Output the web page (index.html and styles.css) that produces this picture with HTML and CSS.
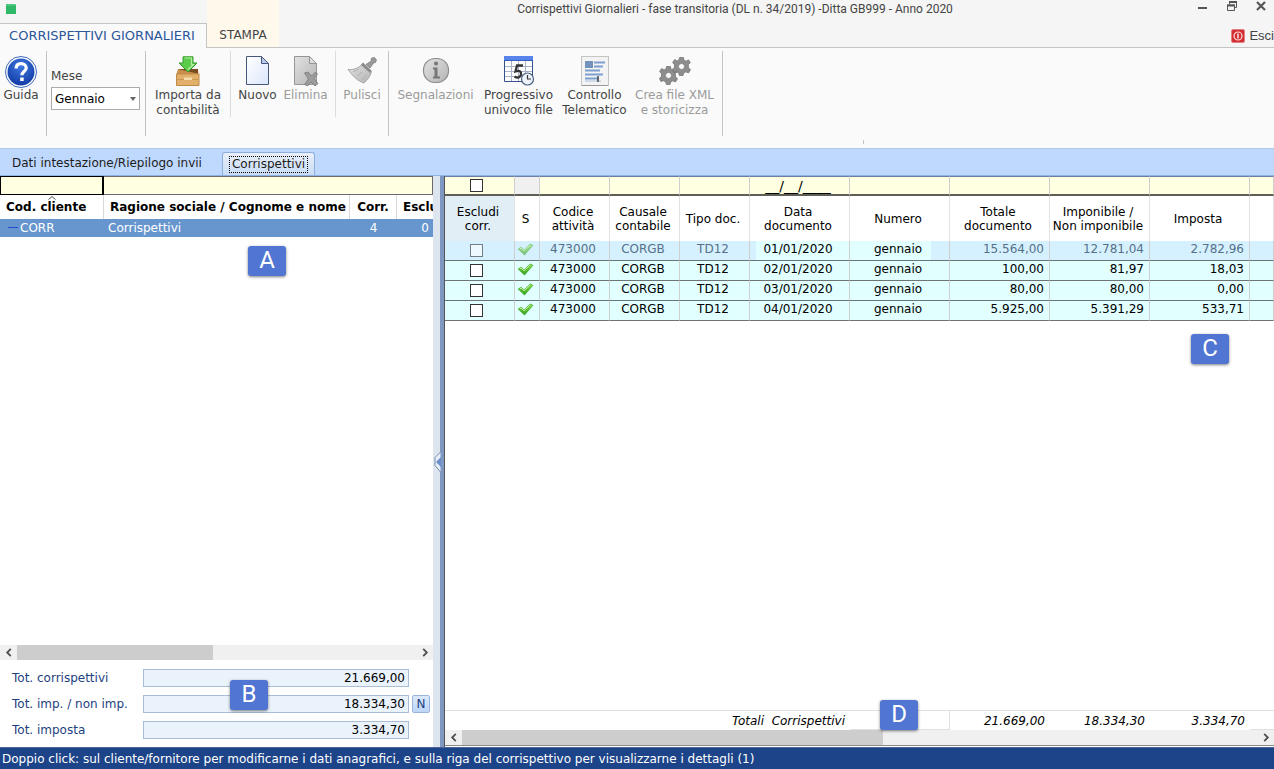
FILE: index.html
```html
<!DOCTYPE html>
<html lang="it">
<head>
    <meta charset="UTF-8">
    <meta name="viewport" content="width=device-width, initial-scale=1.0">
    <title>Corrispettivi Giornalieri</title>
    <link rel="stylesheet" href="styles.css">
</head>
<body>
    <!-- Shared icons -->
    <svg class="icon-defs" width="0" height="0" aria-hidden="true">
        <defs>
            <linearGradient id="check-green" x1="0" y1="0" x2="0" y2="1">
                <stop offset="0" stop-color="#8be04a"/>
                <stop offset="1" stop-color="#2f9e1c"/>
            </linearGradient>
            <linearGradient id="grey-fill" x1="0" y1="0" x2="1" y2="1">
                <stop offset="0" stop-color="#e2e2e2"/>
                <stop offset="1" stop-color="#b4b4b4"/>
            </linearGradient>
            <linearGradient id="page-fill" x1="0" y1="0" x2="1" y2="1">
                <stop offset="0" stop-color="#ffffff"/>
                <stop offset="1" stop-color="#dbe6fb"/>
            </linearGradient>
            <radialGradient id="help-fill" cx="0.5" cy="0.3" r="0.7">
                <stop offset="0" stop-color="#3f78e0"/>
                <stop offset="1" stop-color="#123ba5"/>
            </radialGradient>
            <symbol id="check" viewBox="0 0 18 14">
                <path d="M1 6.500 L4.500 4.500 L7.500 7.500 L14 1 L17 2.500 L8 13 Z" fill="url(#check-green)" stroke="#3fa52c" stroke-width="0.700"/>
                <path d="M3 6.300 L4.500 5.500 L7.500 8.500 L14 2.200" fill="none" stroke="#c9f5a6" stroke-width="1"/>
            </symbol>
            <symbol id="gear" viewBox="-10 -10 20 20">
                <path d="M-2 -9.500H2L2.600 -6.700L4.900 -5.500L7.300 -7.100L9.300 -4L7.200 -2L7.300 1.200L9.500 3.300L7.300 6.800L4.600 5.600L2.300 6.900L1.600 9.600H-2.200L-2.900 6.800L-5.200 5.400L-7.900 6.400L-9.600 3L-7.400 1L-7.300 -1.800L-9.300 -4.200L-7.200 -7.300L-4.700 -5.800L-2.700 -6.900Z" fill="#8d8d8d" stroke="#707070" stroke-width="0.800"/>
                <circle r="3.200" fill="#fafafa" stroke="#777" stroke-width="0.800"/>
            </symbol>
            <symbol id="arrow-left" viewBox="0 0 8 10">
                <path d="M6 1 L2 5 L6 9" fill="none" stroke="#505050" stroke-width="2"/>
            </symbol>
            <symbol id="arrow-right" viewBox="0 0 8 10">
                <path d="M2 1 L6 5 L2 9" fill="none" stroke="#505050" stroke-width="2"/>
            </symbol>
        </defs>
    </svg>

    <div class="app">
        <!-- Title bar and ribbon tabs -->
        <header class="top">
            <div class="top-left">
                <svg class="app-logo" viewBox="0 0 12 12"><path d="M1 1h9l1 1v9H1z" fill="#2fb868"/><path d="M1 1h9v2H1z" fill="#4cc77e"/></svg>
                <button class="ribbon-tab active">CORRISPETTIVI GIORNALIERI</button>
            </div>
            <div class="top-stampa">
                <button class="ribbon-tab">STAMPA</button>
            </div>
            <h1 class="window-title">Corrispettivi Giornalieri - fase transitoria (DL n. 34/2019) -Ditta GB999 - Anno 2020</h1>
            <div class="top-right">
                <div class="window-buttons">
                    <button aria-label="Riduci"><svg viewBox="0 0 12 12"><path d="M1 8h9" stroke="#555" stroke-width="2"/></svg></button>
                    <button aria-label="Ripristina"><svg viewBox="0 0 12 12"><path d="M3.500 4V1.500h7v6H8.500" fill="none" stroke="#555"/><path d="M3 2h8" stroke="#555" stroke-width="2"/><path d="M1.500 5h7v5.500h-7z" fill="#f5f5f5" stroke="#555"/><path d="M1 5.500h8" stroke="#555" stroke-width="2"/></svg></button>
                    <button aria-label="Chiudi"><svg viewBox="0 0 12 12"><path d="M2 2l8 8M10 2l-8 8" stroke="#555" stroke-width="2.200"/></svg></button>
                </div>
                <button class="exit">
                    <svg viewBox="0 0 14 14"><rect x="0.500" y="0.500" width="13" height="13" rx="1.500" fill="#d22f33" stroke="#e58080"/><circle cx="7" cy="7" r="4" fill="none" stroke="#ffd9d9" stroke-width="1.200"/><path d="M7 4.500v5" stroke="#fff" stroke-width="1.300"/></svg>
                    Esci
                </button>
            </div>
        </header>

        <!-- Ribbon -->
        <div class="ribbon">
            <div class="group group-help">
                <button class="tool">
                    <svg viewBox="0 0 32 32"><circle cx="16" cy="16" r="15.500" fill="#fff" stroke="#3c69c0"/><circle cx="16" cy="16" r="13.500" fill="url(#help-fill)"/><path d="M11.200 12.500c0-3 2-4.800 5-4.800s5 1.700 5 4.300c0 3.600-4.300 3.600-4.300 7.300" fill="none" stroke="#fff" stroke-width="3.200"/><rect x="15.200" y="21.500" width="3.500" height="3.500" fill="#fff"/></svg>
                    Guida
                </button>
            </div>
            <div class="group group-month">
                <label for="mese">Mese</label>
                <span class="select-box">
                    <select id="mese"><option>Gennaio</option></select>
                    <svg viewBox="0 0 6 4"><path d="M0 0h6L3 4z" fill="#666"/></svg>
                </span>
            </div>
            <div class="group group-import short">
                <button class="tool">
                    <svg viewBox="0 0 32 32"><path d="M6 13h20v5H6z" fill="#7a4a20"/><path d="M6 13l-1.500 5h23L26 13l1 5z" fill="#c98d4c"/><path d="M4.500 18h22.500v11.500H4.500z" fill="#e3b06c" stroke="#c08a48"/><path d="M5 23.500h21.500" stroke="#cc9550"/><path d="M12 21.500h8v2.500h-8z" fill="#f5dcae"/><path d="M11 0.800h10V7h4l-9 9-9-9h4z" fill="#5ccb4a" stroke="#359c2c"/><path d="M12.500 2h7v6.500h2l-5.500 5" fill="none" stroke="#b5f0a0" stroke-width="1.200"/></svg>
                    Importa da<br>contabilità
                </button>
            </div>
            <div class="group group-edit short">
                <button class="tool tool-new">
                    <svg viewBox="0 0 32 32"><path d="M4.500 0.500h15l7 7v21h-22z" fill="url(#page-fill)" stroke="#46587c"/><path d="M19.500 0.500v7h7z" fill="#b9c9e8" stroke="#46587c"/></svg>
                    Nuovo
                </button>
                <button class="tool tool-delete" disabled>
                    <svg viewBox="0 0 32 32"><path d="M4.500 0.500h15l7 7v21h-22z" fill="url(#grey-fill)" stroke="#969696"/><path d="M19.500 0.500v7h7z" fill="#ddd" stroke="#969696"/><path d="M14.500 17l3.500-1 3.500 4 4-4 2 2-3.500 4.500 4 5-3 2.500-4-4-3.500 4-3-1.500 4-5.500z" fill="#9c9c9c" stroke="#777" stroke-width="0.800"/></svg>
                    Elimina
                </button>
            </div>
            <div class="group group-clean">
                <button class="tool" disabled>
                    <svg viewBox="0 0 32 32"><path d="M20 8.500l5-3.500 .5-3 3-.5 2 2.500-1 2.500-2 .5L24 12z" fill="#999" stroke="#777" stroke-width="0.700"/><path d="M2 13.500c5 .5 11-1 14.500-6l9 8c-1 5-4 8-7.500 11.500C11 25 6 19 2 13.500z" fill="url(#grey-fill)" stroke="#999" stroke-width="0.800"/><path d="M17 6.500l8.500 8-1.500 2.500L15 9z" fill="#8c8c8c"/><path d="M7 16l6-3M11 20l5-4M16 24l4-5" stroke="#aaa" stroke-width="0.800"/></svg>
                    Pulisci
                </button>
            </div>
            <div class="group group-xml">
                <button class="tool tool-info" disabled>
                    <svg viewBox="0 0 32 32"><rect x="3.500" y="2.500" width="25" height="24" rx="11.500" fill="url(#grey-fill)" stroke="#8c8c8c" stroke-width="1.200"/><circle cx="16" cy="7.500" r="2" fill="#777"/><path d="M13 11.500h4.500v9H20v2h-7v-2h1.500v-7H13z" fill="#777"/></svg>
                    Segnalazioni
                </button>
                <button class="tool tool-progress">
                    <svg viewBox="0 0 32 32"><path d="M1.500 0.500h28v25h-28z" fill="#fff" stroke="#35508c"/><path d="M1 0h29v4.500H1z" fill="#5684ea"/><path d="M1 4.500h29" stroke="#3460bd"/><path d="M8.500 5v20M15.500 5v20M22.500 5v20M2 10.500h27M2 15.500h27M2 20.500h27" stroke="#a9b3c8"/><path d="M20 9.500h-6l-1.500 6c4-1.500 6 0 5.500 3s-3.500 4-6.500 2" fill="none" stroke="#333" stroke-width="2.300"/><circle cx="24.500" cy="23" r="6" fill="#eef3fb" stroke="#4c6284" stroke-width="1.200"/><path d="M24.500 19v4h3.500" fill="none" stroke="#333" stroke-width="1.200"/></svg>
                    Progressivo<br>univoco file
                </button>
                <button class="tool tool-check">
                    <svg viewBox="0 0 32 32"><rect x="2.500" y="0.500" width="27" height="29" fill="#f3f3f3" stroke="#c4c4c4"/><path d="M3 29.500h26" stroke="#999"/><path d="M6 5h8v7H6z" fill="#7291bd"/><path d="M15 6.500h11M15 10.500h9M6 14.500h15M6 18.500h18M6 22.500h14" stroke="#7d9fd0" stroke-width="2"/><path d="M6 25h16" stroke="#a9c1e2"/><path d="M19 20v6" stroke="#444" stroke-width="1.500"/></svg>
                    Controllo<br>Telematico
                </button>
                <button class="tool tool-xml" disabled>
                    <svg viewBox="0 0 32 32"><use href="#gear" x="0" y="10" width="19" height="19"/><use href="#gear" x="13" y="1" width="19" height="19"/></svg>
                    Crea file XML<br>e storicizza
                </button>
            </div>
            <div class="ribbon-rest"></div>
        </div>

        <!-- Page tabs -->
        <nav class="page-tabs">
            <a href="#intestazione">Dati intestazione/Riepilogo invii</a>
            <a href="#corrispettivi" class="current"><span>Corrispettivi</span></a>
        </nav>

        <main class="content">
            <!-- Clients -->
            <section class="clients">
                <table class="client-table">
                    <colgroup>
                        <col class="c-code"><col class="c-name"><col class="c-corr"><col>
                    </colgroup>
                    <thead>
                        <tr class="filters">
                            <td class="focused"><input type="text" aria-label="Filtra codice cliente"></td>
                            <td colspan="3"><input type="text" aria-label="Filtra ragione sociale"></td>
                        </tr>
                        <tr class="titles">
                            <th>Cod. cliente<svg class="sort" viewBox="0 0 8 4"><path d="M0.500 3.500L4 0.500l3.500 3" fill="none" stroke="#555"/></svg></th>
                            <th>Ragione sociale / Cognome e nome</th>
                            <th class="center">Corr.</th>
                            <th>Esclu</th>
                        </tr>
                    </thead>
                    <tbody>
                        <tr>
                            <td class="code">CORR</td>
                            <td>Corrispettivi</td>
                            <td class="center">4</td>
                            <td class="number">0</td>
                        </tr>
                    </tbody>
                </table>
                <div class="empty"></div>
                <div class="scrollbar">
                    <button aria-label="Scorri a sinistra"><svg><use href="#arrow-left"/></svg></button>
                    <div class="track"><div class="thumb"></div></div>
                    <button aria-label="Scorri a destra"><svg><use href="#arrow-right"/></svg></button>
                </div>
                <form class="totals">
                    <label for="tot-corr">Tot. corrispettivi</label>
                    <input type="text" id="tot-corr" value="21.669,00" readonly>
                    <span></span>
                    <label for="tot-imp">Tot. imp. / non imp.</label>
                    <input type="text" id="tot-imp" value="18.334,30" readonly>
                    <button type="button">N</button>
                    <label for="tot-imposta">Tot. imposta</label>
                    <input type="text" id="tot-imposta" value="3.334,70" readonly>
                </form>
                <span class="marker marker-a">A</span>
                <span class="marker marker-b">B</span>
            </section>

            <div class="gutter">
                <svg viewBox="0 0 8 22"><path d="M7.500 1L2 6.500v8l5.500 6.500" fill="#e7eefb" stroke="#7a8ca8"/><path d="M8 6v10L3 11z" fill="#6b8fcb"/></svg>
            </div>

            <!-- Documents -->
            <section class="documents">
                <table class="doc-table">
                    <colgroup>
                        <col class="d-first"><col class="d-state"><col class="d-small"><col class="d-small"><col class="d-small"><col class="d-wide"><col class="d-wide"><col class="d-wide"><col class="d-wide"><col class="d-wide"><col>
                    </colgroup>
                    <thead>
                        <tr class="filters">
                            <td class="tick"><input type="checkbox" aria-label="Filtra esclusi"></td>
                            <td class="off"></td>
                            <td></td>
                            <td></td>
                            <td></td>
                            <td><input type="text" class="date-filter" aria-label="Filtra data" value="__/__/____"></td>
                            <td></td>
                            <td></td>
                            <td></td>
                            <td></td>
                            <td></td>
                        </tr>
                        <tr class="titles">
                            <th class="hot">Escludi<br>corr.</th>
                            <th>S</th>
                            <th>Codice<br>attività</th>
                            <th>Causale<br>contabile</th>
                            <th>Tipo doc.</th>
                            <th>Data<br>documento</th>
                            <th>Numero</th>
                            <th>Totale<br>documento</th>
                            <th>Imponibile /<br>Non imponibile</th>
                            <th>Imposta</th>
                            <th></th>
                        </tr>
                    </thead>
                    <tbody>
                        <tr class="selected">
                            <td class="tick"><input type="checkbox" aria-label="Escludi 01/01/2020"></td>
                            <td><svg class="check"><use href="#check"/></svg></td>
                            <td>473000</td>
                            <td>CORGB</td>
                            <td>TD12</td>
                            <td class="date">01/01/2020</td>
                            <td class="ref">gennaio</td>
                            <td class="number">15.564,00</td>
                            <td class="number">12.781,04</td>
                            <td class="number">2.782,96</td>
                            <td></td>
                        </tr>
                        <tr>
                            <td class="tick"><input type="checkbox" aria-label="Escludi 02/01/2020"></td>
                            <td><svg class="check"><use href="#check"/></svg></td>
                            <td>473000</td>
                            <td>CORGB</td>
                            <td>TD12</td>
                            <td>02/01/2020</td>
                            <td>gennaio</td>
                            <td class="number">100,00</td>
                            <td class="number">81,97</td>
                            <td class="number">18,03</td>
                            <td></td>
                        </tr>
                        <tr>
                            <td class="tick"><input type="checkbox" aria-label="Escludi 03/01/2020"></td>
                            <td><svg class="check"><use href="#check"/></svg></td>
                            <td>473000</td>
                            <td>CORGB</td>
                            <td>TD12</td>
                            <td>03/01/2020</td>
                            <td>gennaio</td>
                            <td class="number">80,00</td>
                            <td class="number">80,00</td>
                            <td class="number">0,00</td>
                            <td></td>
                        </tr>
                        <tr>
                            <td class="tick"><input type="checkbox" aria-label="Escludi 04/01/2020"></td>
                            <td><svg class="check"><use href="#check"/></svg></td>
                            <td>473000</td>
                            <td>CORGB</td>
                            <td>TD12</td>
                            <td>04/01/2020</td>
                            <td>gennaio</td>
                            <td class="number">5.925,00</td>
                            <td class="number">5.391,29</td>
                            <td class="number">533,71</td>
                            <td></td>
                        </tr>
                    </tbody>
                </table>
                <div class="empty"></div>
                <table class="sum-table">
                    <colgroup>
                        <col class="s-label"><col class="d-wide"><col class="d-wide"><col class="d-wide"><col class="d-wide"><col>
                    </colgroup>
                    <tbody>
                        <tr>
                            <th>Totali&nbsp; Corrispettivi</th>
                            <td class="boxed"></td>
                            <td>21.669,00</td>
                            <td>18.334,30</td>
                            <td>3.334,70</td>
                            <td class="under"></td>
                        </tr>
                    </tbody>
                </table>
                <div class="scrollbar scrollbar-docs">
                    <button aria-label="Scorri a sinistra"><svg><use href="#arrow-left"/></svg></button>
                    <div class="track"><div class="thumb"></div></div>
                    <button aria-label="Scorri a destra"><svg><use href="#arrow-right"/></svg></button>
                </div>
                <span class="marker marker-c">C</span>
                <span class="marker marker-d">D</span>
            </section>
        </main>

        <!-- Status bar -->
        <footer class="status">Doppio click: sul cliente/fornitore per modificarne i dati anagrafici, e sulla riga del corrispettivo per visualizzarne i dettagli (1)</footer>
    </div>
</body>
</html>
```

FILE: styles.css
```css
/* Global Styles */
* {
    box-sizing: border-box;
}

body {
    margin: 0;
    font-family: "DejaVu Sans", Verdana, sans-serif;
    font-size: 12px;
    line-height: 14px;
    color: #000;
    background: #fff;
}

button,
input,
select {
    font: inherit;
    color: inherit;
    margin: 0;
    padding: 0;
    border: none;
    background: none;
}

table {
    width: 100%;
    table-layout: fixed;
    border-collapse: separate;
    border-spacing: 0;
}

th,
td {
    padding: 0;
    font-weight: normal;
    white-space: nowrap;
}

.icon-defs {
    position: absolute;
}

.app {
    display: flex;
    flex-direction: column;
    height: 100vh;
}

/* Title bar */
.top {
    display: flex;
    flex: none;
    height: 48px;
    background: linear-gradient(#c4c4c4, #c4c4c4) bottom / 100% 1px no-repeat #f5f5f5;
}

.top-left {
    display: flex;
    flex-direction: column;
    justify-content: space-between;
    width: 207px;
}

.app-logo {
    width: 12px;
    height: 12px;
    margin: 3px 5px;
}

.ribbon-tab {
    height: 25px;
    color: #444;
}

.ribbon-tab.active {
    padding-right: 2px;
    font-size: 13px;
    white-space: nowrap;
    color: #2b579a;
    background: #fafafa;
    border-top: 1px solid #c4c4c4;
    border-right: 1px solid #c4c4c4;
}

.top-stampa {
    display: flex;
    align-items: flex-end;
    justify-content: center;
    width: 72px;
    height: 47px;
    background: #fff9ec;
}

.window-title {
    flex: 1;
    margin: 0;
    padding-left: 7px;
    font: 12px/18px Roboto, "Segoe UI", sans-serif;
    text-align: center;
    color: #444;
}

.top-right {
    display: flex;
    flex-direction: column;
    align-items: flex-end;
    justify-content: space-between;
    width: 90px;
}

.window-buttons {
    display: flex;
    gap: 17px;
    padding-right: 7px;
}

.window-buttons button,
.window-buttons svg {
    display: block;
    width: 12px;
    height: 12px;
}

.exit {
    display: flex;
    align-items: center;
    gap: 4px;
    height: 25px;
    font: 13px/24px "Liberation Sans", Arial, sans-serif;
    color: #444;
}

.exit svg {
    width: 14px;
    height: 14px;
}

/* Ribbon */
.ribbon {
    display: flex;
    flex: none;
    height: 101px;
    padding-top: 3px;
    background: #fafafa;
    border-bottom: 1px solid #b5c7e6;
}

.group {
    display: flex;
    align-items: flex-start;
    justify-content: center;
    height: 85px;
    padding-top: 5px;
    border-right: 1px solid #c4c4c4;
}

.group.short {
    height: 66px;
    border-color: #dcdcdc;
}

.tool {
    display: block;
    line-height: 15px;
    text-align: center;
    white-space: nowrap;
    color: #444;
}

.tool:disabled {
    color: #9b9b9b;
}

.tool svg {
    display: block;
    width: 32px;
    height: 32px;
    margin: 0 auto;
}

.group-help {
    width: 47px;
    padding-right: 4px;
}

.group-month {
    flex-direction: column;
    align-items: stretch;
    gap: 4px;
    width: 99px;
    padding: 0 5px 8px 4px;
    color: #444;
}

.select-box {
    position: relative;
    display: block;
}

.select-box select {
    width: 100%;
    height: 23px;
    padding-left: 3px;
    appearance: none;
    color: #000;
    background: #fff;
    border: 1px solid #ababab;
}

.select-box svg {
    position: absolute;
    right: 4px;
    top: 10px;
    width: 6px;
    height: 4px;
}

.group-import {
    width: 85px;
}

.group-edit {
    width: 105px;
    padding-right: 5px;
}

.tool-new {
    width: 50px;
}

.tool-delete {
    width: 46px;
}

.group-clean {
    width: 53px;
}

.group-xml {
    width: 334px;
    padding-right: 2px;
}

.tool-info {
    width: 88px;
}

.tool-progress {
    width: 78px;
}

.tool-check {
    width: 74px;
}

.tool-xml {
    width: 86px;
}

.ribbon-rest {
    align-self: flex-end;
    width: 141px;
    height: 4px;
    margin-bottom: 4px;
    border-right: 1px solid #c4c4c4;
}

/* Page tabs */
.page-tabs {
    display: flex;
    flex: none;
    align-items: flex-end;
    gap: 4px;
    height: 27px;
    padding-left: 1px;
    background: #bfd8fe;
    border-bottom: 1px solid #8eb2e6;
}

.page-tabs a {
    display: flex;
    align-items: center;
    height: 25px;
    padding: 0 16px 0 11px;
    color: #1c1c1c;
    text-decoration: none;
}

.page-tabs .current {
    height: 23px;
    padding: 0 6px;
    background: linear-gradient(#e9eff8, #c9dcf5);
    border: 1px solid #8eaede;
    border-bottom: none;
    border-radius: 3px 3px 0 0;
}

.page-tabs .current span {
    padding: 0 2px 1px;
    border: 1px dotted #000;
}

/* Content */
.content {
    display: grid;
    grid-template-columns: 433px 12px 1fr;
    flex: 1;
    min-height: 0;
}

.clients,
.documents {
    position: relative;
    display: flex;
    flex-direction: column;
    min-width: 0;
}

.empty {
    flex: 1;
}

.gutter {
    display: flex;
    align-items: center;
    background: linear-gradient(to right, #dde6ee 7px, #7f98c2 7px, #7f98c2 11px, #555 11px);
}

.gutter svg {
    width: 8px;
    height: 22px;
}

.filters td {
    background: #ffffe1;
}

/* Clients */
.c-code {
    width: 104px;
}

.c-name {
    width: 246px;
}

.c-corr {
    width: 47px;
}

.client-table .filters td {
    height: 19px;
    border: 1px solid #6b6b6b;
    border-left: none;
}

.client-table .filters .focused {
    border: 1px solid #000;
    border-right-width: 2px;
}

.client-table .filters input {
    display: block;
    width: 100%;
    height: 16px;
    outline: none;
}

.client-table .titles th {
    position: relative;
    height: 24px;
    padding-left: 6px;
    font-weight: bold;
    text-align: left;
    overflow: hidden;
    border-right: 1px solid #d9d9d9;
}

.client-table .titles th:last-child {
    border-right: none;
}

.sort {
    position: absolute;
    left: 48px;
    top: 1px;
    width: 8px;
    height: 4px;
}

.client-table tbody td {
    height: 18px;
    padding-left: 4px;
    color: #fff;
    background: #6796cf;
}

.client-table tbody .code {
    padding-left: 8px;
}

.client-table tbody .code::before {
    content: "";
    display: inline-block;
    width: 10px;
    height: 1px;
    margin-right: 2px;
    vertical-align: 4px;
    background: #2148d0;
}

.client-table .center,
.client-table .titles .center {
    padding: 0;
    text-align: center;
}

.client-table .number {
    padding-right: 4px;
    text-align: right;
}

/* Scrollbars */
.scrollbar {
    display: flex;
    flex: none;
    height: 15px;
    background: #f0f0f0;
}

.scrollbar button {
    display: flex;
    align-items: center;
    justify-content: center;
    width: 17px;
}

.scrollbar svg {
    width: 8px;
    height: 9px;
}

.track {
    flex: 1;
}

.thumb {
    width: 49%;
    height: 15px;
    background: #cdcdcd;
}

.scrollbar-docs {
    height: 16px;
    margin-bottom: 1px;
    border-bottom: 1px solid #8a8a8a;
}

.scrollbar-docs .thumb {
    width: 53%;
}

/* Totals */
.totals {
    display: grid;
    grid-template-columns: 128px 266px 18px;
    column-gap: 3px;
    row-gap: 8px;
    align-items: center;
    padding: 9px 0 8px 12px;
    color: #1e3f80;
}

.totals label {
    grid-column: 1;
    white-space: nowrap;
}

.totals input {
    width: 266px;
    height: 18px;
    padding-right: 3px;
    text-align: right;
    color: #000;
    background: #eaf2fc;
    border: 1px solid #aabdd8;
}

.totals button {
    height: 18px;
    background: linear-gradient(#dbe9fc, #bdd5f8);
    border: 1px solid #9ab4da;
    border-radius: 2px;
}

/* Documents */
.d-first {
    width: 70px;
}

.d-state {
    width: 25px;
}

.d-small {
    width: 70px;
}

.d-wide {
    width: 100px;
}

.s-label {
    width: 405px;
}

.doc-table th,
.doc-table td {
    padding-right: 3px;
    text-align: center;
    border-right: 1px solid #cfcfcf;
}

.doc-table .tick {
    padding-right: 6px;
}

.doc-table .filters td {
    height: 20px;
    border-top: 1px solid #6d7ea6;
    border-bottom: 2px solid #5f5f55;
}

.doc-table .filters .off {
    background: #f0f0f0;
}

.doc-table .titles th {
    height: 45px;
    border-right-color: #e2e2e2;
}

.doc-table .titles .hot {
    background: #e1eef6;
}

.doc-table tbody td {
    height: 20px;
    padding-bottom: 3px;
    background: #e1ffff;
    border-bottom: 1px solid #6e7373;
}

.doc-table tbody .number {
    padding-right: 5px;
    text-align: right;
}

.doc-table tbody .selected td {
    color: #56718a;
    background: #d5f0fe;
}

.doc-table tbody .selected .date {
    color: #000;
    background: linear-gradient(to right, #d5f0fe 6px, #e1ffff 6px);
}

.doc-table tbody .selected .ref {
    color: #000;
    background: linear-gradient(to right, #e1ffff 81px, #d5f0fe 81px);
}

.doc-table input[type="checkbox"] {
    display: block;
    width: 13px;
    height: 13px;
    margin: 0 auto;
    appearance: none;
    background: #fff;
    border: 1px solid #333;
}

.doc-table tbody .tick {
    padding-bottom: 0;
}

.selected input[type="checkbox"],
.selected .check {
    opacity: 0.6;
}

.doc-table .check {
    display: block;
    width: 17px;
    height: 13px;
    margin: 0 auto;
}

.date-filter {
    display: block;
    width: 100%;
    font-size: 14px;
    text-align: center;
}

.sum-table th,
.sum-table td {
    height: 20px;
    padding-right: 5px;
    font-style: italic;
    text-align: right;
    border-top: 1px solid #e0e0e0;
}

.sum-table .boxed {
    border-right: 1px solid #e0e0e0;
    border-bottom: 1px solid #e0e0e0;
}

.sum-table .under {
    border-bottom: 1px solid #e0e0e0;
}

/* Markers over the panels */
.marker {
    position: absolute;
    width: 38px;
    height: 30px;
    font: 24px/29px Roboto, sans-serif;
    text-align: center;
    color: #fff;
    background: #5075d2;
    border-radius: 3px;
    box-shadow: 0 1px 3px rgba(0, 0, 0, 0.5);
}

.marker-a {
    left: 248px;
    top: 70px;
}

.marker-b {
    left: 230px;
    bottom: 37px;
}

.marker-c {
    right: 45px;
    top: 158px;
}

.marker-d {
    right: 356px;
    bottom: 17px;
}

/* Status bar */
.status {
    flex: none;
    height: 22px;
    padding-left: 2px;
    line-height: 22px;
    white-space: nowrap;
    color: #fff;
    background: #1d4489;
    border-top: 1px solid #4c6596;
}
```
